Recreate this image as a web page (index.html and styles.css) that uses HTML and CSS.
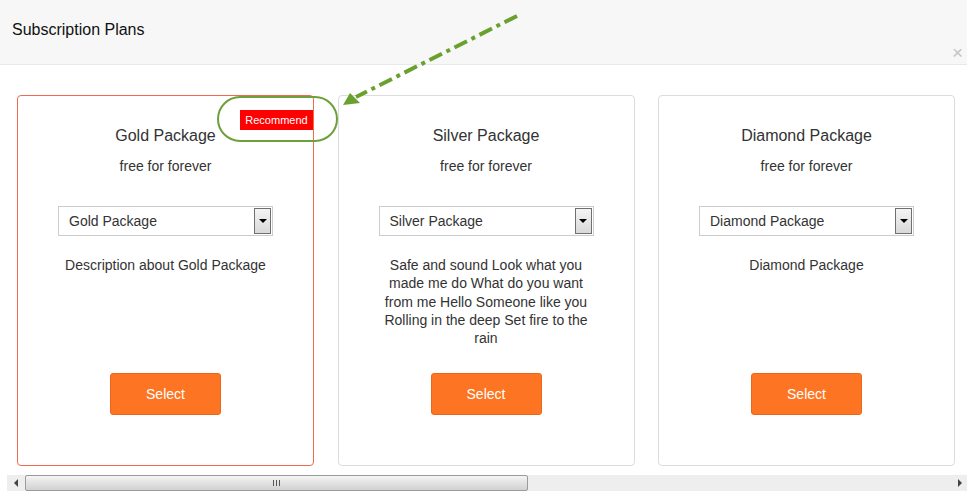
FILE: index.html
```html
<!DOCTYPE html>
<html lang="en">
<head>
<meta charset="utf-8">
<title>Subscription Plans</title>
<link rel="stylesheet" href="styles.css">
</head>
<body>
<div class="modal">
  <header class="modal-header">
    <h2 class="modal-title">Subscription Plans</h2>
    <span class="close">&times;</span>
  </header>
  <div class="plans">
    <div class="plan plan-featured">
      <span class="badge">Recommend</span>
      <h3 class="plan-name">Gold Package</h3>
      <p class="plan-price">free for forever</p>
      <div class="select"><span class="select-text">Gold Package</span><span class="select-btn"><span class="caret"></span></span></div>
      <p class="plan-desc">Description about Gold Package</p>
      <button class="btn-select">Select</button>
    </div>
    <div class="plan">
      <h3 class="plan-name">Silver Package</h3>
      <p class="plan-price">free for forever</p>
      <div class="select"><span class="select-text">Silver Package</span><span class="select-btn"><span class="caret"></span></span></div>
      <p class="plan-desc">Safe and sound Look what you made me do What do you want from me Hello Someone like you Rolling in the deep Set fire to the rain</p>
      <button class="btn-select">Select</button>
    </div>
    <div class="plan">
      <h3 class="plan-name">Diamond Package</h3>
      <p class="plan-price">free for forever</p>
      <div class="select"><span class="select-text">Diamond Package</span><span class="select-btn"><span class="caret"></span></span></div>
      <p class="plan-desc">Diamond Package</p>
      <button class="btn-select">Select</button>
    </div>
  </div>
  <div class="hscroll">
    <span class="hs-arrow hs-left"></span>
    <span class="hs-thumb"><span class="grip"></span></span>
    <span class="hs-track"></span>
    <span class="hs-arrow hs-right"></span>
  </div>
</div>
<svg class="annotation" width="967" height="492" viewBox="0 0 967 492">
  <rect x="218" y="97" width="119" height="44" rx="22" ry="22" fill="none" stroke="#6ea03a" stroke-width="2"/>
  <line x1="517" y1="16" x2="356" y2="97" stroke="#6aa02e" stroke-width="4" stroke-dasharray="14 5 4 5"/>
  <polygon points="343,105 350,93 360,103" fill="#6aa02e"/>
</svg>
</body>
</html>
```

FILE: styles.css
```css
* { box-sizing: border-box; }
html, body { margin: 0; padding: 0; background: #fff; }
body {
  font-family: Arial, "Liberation Sans", sans-serif;
  color: #333;
  width: 967px;
  height: 492px;
  overflow: hidden;
  position: relative;
}
.modal { display: flex; flex-direction: column; }
.modal-header {
  height: 65px;
  background: #f7f7f7;
  border-bottom: 1px solid #e9e9e9;
  display: flex;
  justify-content: space-between;
  padding: 0 4px 0 12px;
}
.modal-title {
  margin: 20px 0 0;
  font-size: 16px;
  line-height: 20px;
  font-weight: normal;
  color: #111;
}
.close {
  align-self: flex-end;
  margin-bottom: 3px;
  font-size: 19px;
  line-height: 16px;
  color: #c4c4c4;
}
.plans {
  display: flex;
  gap: 23.5px;
  padding: 30px 0 0 17px;
}
.plan {
  position: relative;
  width: 297px;
  height: 371px;
  border: 1px solid #dcdcdc;
  border-radius: 4px;
  padding: 30px 0 0;
  display: flex;
  flex-direction: column;
  align-items: center;
  text-align: center;
}
.plan-featured { border-color: #f06a50; }
.badge {
  position: absolute;
  top: 14px;
  right: 0;
  width: 73px;
  height: 20px;
  background: #ff0000;
  color: #fff;
  font-size: 11px;
  line-height: 20px;
  text-align: center;
}
.plan-name {
  margin: 0;
  font-size: 16px;
  line-height: 20px;
  font-weight: normal;
}
.plan-price {
  margin: 11px 0 0;
  font-size: 14px;
  line-height: 18px;
}
.select {
  margin-top: 31px;
  width: 215px;
  height: 30px;
  border: 1px solid #cccccc;
  display: flex;
  align-items: center;
  justify-content: space-between;
  padding: 0 1px 0 10px;
  font-size: 14px;
  text-align: left;
}
.select-btn {
  width: 17px;
  height: 26px;
  border: 1px solid #707070;
  background: linear-gradient(#f4f4f4, #d9d9d9);
  display: flex;
  align-items: center;
  justify-content: center;
}
.caret {
  width: 0;
  height: 0;
  border-left: 4px solid transparent;
  border-right: 4px solid transparent;
  border-top: 4px solid #000;
}
.plan-desc {
  margin: 20px 0 0;
  width: 220px;
  height: 117px;
  font-size: 14px;
  line-height: 18.3px;
}
.btn-select {
  width: 111px;
  height: 42px;
  background: #fd7422;
  border: 1px solid #e9661c;
  border-radius: 3px;
  color: #fff;
  font-family: Arial, "Liberation Sans", sans-serif;
  font-size: 14px;
  padding: 0;
}
.hscroll {
  margin: 9px 0 0 7px;
  height: 16px;
  display: flex;
  background: #eeeeee;
}
.hs-arrow {
  width: 18px;
  height: 16px;
  display: flex;
  align-items: center;
  justify-content: center;
  background: #eeeeee;
}
.hs-left::before {
  content: "";
  border-top: 4px solid transparent;
  border-bottom: 4px solid transparent;
  border-right: 4px solid #444;
}
.hs-right { margin-left: auto; }
.hs-right::before {
  content: "";
  border-top: 4px solid transparent;
  border-bottom: 4px solid transparent;
  border-left: 4px solid #444;
  margin-left: 4px;
}
.hs-thumb {
  width: 503px;
  height: 16px;
  border: 1px solid #9b9b9b;
  border-radius: 2px;
  background: linear-gradient(#f5f5f5, #e2e2e2 50%, #d2d2d2);
  display: flex;
  align-items: center;
  justify-content: center;
}
.grip {
  width: 7px;
  height: 6px;
  background: repeating-linear-gradient(90deg, #555 0 1px, transparent 1px 3px);
}
.hs-track { flex: 1; }
.annotation {
  position: absolute;
  left: 0;
  top: 0;
  pointer-events: none;
}
```
